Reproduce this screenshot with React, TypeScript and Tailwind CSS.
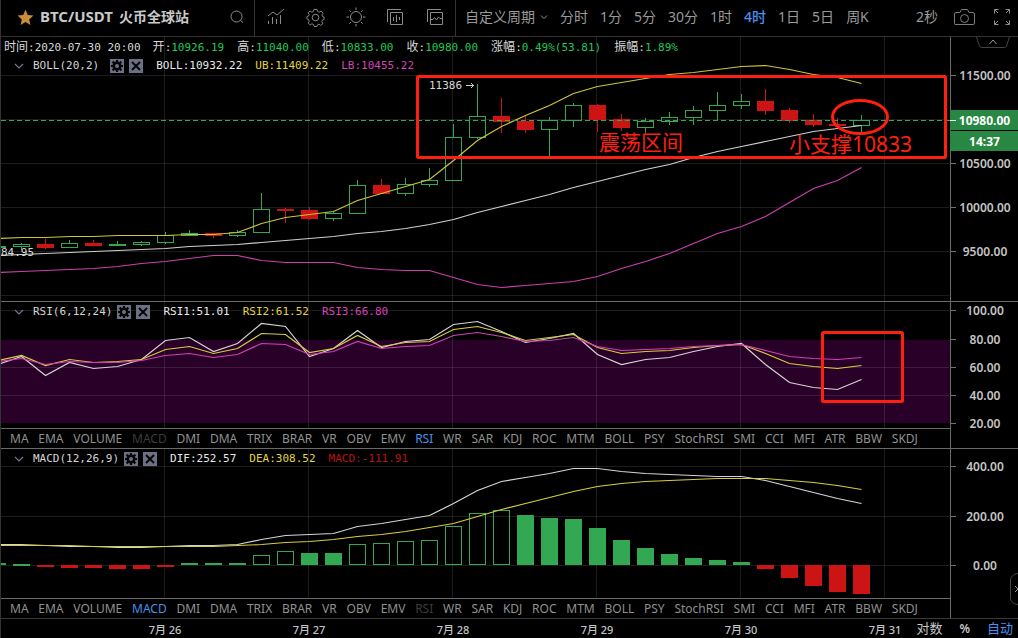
import clsx from "clsx";
import { ReactNode } from "react";

type Candle = [high: number, top: number, bottom: number, low: number, up: boolean];

const MONO = "font-['DejaVu_Sans_Mono','Noto_Sans_CJK_SC',monospace]";
const SANS = "font-['Noto_Sans','Noto_Sans_CJK_SC',sans-serif]";

const STEP = 24;
const FIRST_X = -3;
const BODY = 17;
const DAYS = [165, 309, 453, 597, 741, 885];

const CANDLES: Candle[] = [
    [246, 246, 248, 248, true],
    [243, 244, 247, 250, true],
    [239, 244, 248, 249, false],
    [240, 243, 248, 248, true],
    [240, 243, 246, 246, false],
    [241, 244, 246, 246, true],
    [241, 242, 245, 246, true],
    [232, 235, 243, 244, true],
    [230, 233, 236, 236, true],
    [233, 233, 236, 238, false],
    [230, 232, 236, 237, true],
    [193, 209, 233, 233, true],
    [208, 209, 211, 223, false],
    [207, 210, 219, 220, false],
    [212, 213, 219, 221, true],
    [180, 185, 214, 214, true],
    [179, 185, 194, 194, false],
    [178, 184, 194, 196, true],
    [168, 180, 185, 187, true],
    [124, 137, 181, 181, true],
    [84, 116, 138, 139, true],
    [98, 116, 122, 133, false],
    [116, 121, 130, 133, false],
    [117, 120, 130, 156, true],
    [103, 105, 121, 127, true],
    [104, 105, 120, 132, false],
    [114, 119, 128, 131, false],
    [118, 121, 128, 133, true],
    [112, 117, 122, 125, true],
    [106, 110, 118, 125, true],
    [92, 105, 111, 120, true],
    [94, 101, 106, 109, true],
    [89, 101, 111, 115, false],
    [108, 110, 121, 123, false],
    [114, 120, 125, 127, false],
    [118, 124, 126, 126, false],
    [115, 120, 126, 132, true],
];

const UPPER = [
    238, 237, 237, 236, 236, 235, 235, 235, 234, 234, 232, 223, 217, 214, 211, 200, 193, 186, 179, 160, 140, 126, 115,
    105, 93, 86, 82, 78, 74, 72, 69, 66, 65, 69, 74, 77, 83,
];
const MIDDLE = [
    255, 254, 253, 252, 251, 250, 249, 248, 246, 245, 244, 242, 240, 238, 236, 233, 231, 228, 224, 219, 212, 206, 200,
    194, 187, 181, 175, 169, 164, 157, 151, 146, 141, 136, 131, 128, 125,
];
const LOWER = [
    272, 271, 270, 269, 268, 266, 263, 261, 258, 255, 255, 260, 262, 262, 262, 267, 269, 270, 270, 277, 284, 287, 285,
    283, 281, 276, 268, 261, 253, 243, 233, 226, 216, 202, 188, 180, 167,
];

const RSI1 = [
    364, 356, 375, 362, 368, 366, 359, 340, 337, 351, 343, 323, 326, 356, 348, 330, 347, 341, 339, 324, 321, 331, 342,
    338, 333, 354, 364, 359, 357, 351, 346, 343, 364, 382, 387, 389, 379,
];
const RSI2 = [
    360, 355, 365, 359, 362, 361, 359, 349, 346, 353, 348, 333, 334, 352, 348, 335, 346, 342, 341, 329, 326, 332, 340,
    337, 334, 347, 353, 351, 350, 347, 345, 344, 353, 363, 366, 368, 365,
];
const RSI3 = [
    361, 358, 364, 361, 362, 362, 360, 355, 353, 357, 354, 343, 344, 354, 351, 341, 348, 346, 345, 335, 332, 336, 341,
    340, 337, 346, 350, 349, 348, 346, 345, 344, 350, 356, 358, 359, 357,
];

const DIF = [
    544, 544, 545, 546, 546, 547, 547, 546, 545, 545, 544, 539, 535, 534, 533, 526, 523, 519, 515, 503, 490, 481, 477,
    473, 468, 468, 471, 473, 474, 475, 476, 476, 480, 486, 492, 498, 503,
];
const DEA = [
    545, 545, 545, 545, 546, 546, 546, 546, 546, 546, 545, 544, 542, 541, 539, 536, 534, 531, 527, 523, 516, 509, 503,
    497, 491, 486, 483, 481, 480, 479, 478, 478, 478, 480, 482, 485, 489,
];

// "rise" bars are drawn hollow
const BARS: [number, number, "up" | "rise" | "down"][] = [
    [563, 565, "up"],
    [564, 566, "up"],
    [565, 567, "down"],
    [565, 568, "down"],
    [565, 568, "down"],
    [565, 569, "down"],
    [565, 569, "down"],
    [565, 567, "down"],
    [563, 565, "up"],
    [563, 565, "up"],
    [563, 565, "up"],
    [555, 565, "rise"],
    [551, 565, "rise"],
    [553, 565, "up"],
    [553, 565, "up"],
    [544, 565, "rise"],
    [543, 565, "rise"],
    [541, 565, "rise"],
    [540, 565, "rise"],
    [526, 565, "rise"],
    [513, 565, "rise"],
    [510, 565, "rise"],
    [515, 565, "up"],
    [518, 565, "up"],
    [519, 565, "up"],
    [528, 565, "up"],
    [540, 565, "up"],
    [548, 565, "up"],
    [554, 565, "up"],
    [558, 565, "up"],
    [560, 565, "up"],
    [562, 565, "up"],
    [565, 569, "down"],
    [565, 578, "down"],
    [565, 586, "down"],
    [565, 592, "down"],
    [565, 594, "down"],
];

const INDICATORS =
    "MA EMA VOLUME MACD DMI DMA TRIX BRAR VR OBV EMV RSI WR SAR KDJ ROC MTM BOLL PSY StochRSI SMI CCI MFI ATR BBW SKDJ".split(
        " "
    );

const PERIODS = ["分时", "1分", "5分", "30分", "1时", "4时", "1日", "5日", "周K"];

const SUMMARY = [
    ["开", "10926.19"],
    ["高", "11040.00"],
    ["低", "10833.00"],
    ["收", "10980.00"],
    ["涨幅", "0.49%(53.81)"],
    ["振幅", "1.89%"],
];

const cx = (i: number) => FIRST_X + STEP * i;

const Curve = ({ values, color }: { values: number[]; color: string }) => (
    <polyline
        points={values.map((y, i) => `${cx(i) + 0.5},${y + 0.5}`).join(" ")}
        fill="none"
        stroke={color}
        strokeWidth={1.2}
    />
);

const Grid = ({ rows, height, top }: { rows: number[]; height: number; top: number }) => (
    <g fill="#fff" fillOpacity={0.11} shapeRendering="crispEdges">
        {rows.map((y) => (
            <rect key={y} x={0} y={y} width="100%" height={1} />
        ))}
        {DAYS.map((x) => (
            <rect key={x} x={x - 1} y={top} width={1} height={height} />
        ))}
    </g>
);

const Axis = ({ top, height, labels }: { top: number; height: number; labels: [number, string][] }) => (
    <svg className={clsx("block w-full", SANS)} height={height}>
        <g transform={`translate(-951 ${-top})`}>
            {labels.map(([y, text]) => (
                <g key={text}>
                    <rect x={951} y={y} width={5} height={1} fill="#6e6e6e" />
                    <text x={985} y={y + 5} textAnchor="middle" fill="#c4c4c4" fontSize={12} fontWeight={600}>
                        {text}
                    </text>
                </g>
            ))}
        </g>
    </svg>
);

const Pane = ({ children, axis, last }: { children: ReactNode; axis: ReactNode; last?: boolean }) => (
    <section className={clsx("flex border-b", last ? "border-[#3a3a3a]" : "border-[#6a6a6a]")}>
        <div className="relative min-w-0 flex-1">{children}</div>
        <div className="relative w-[68px] shrink-0 border-l border-[#6a6a6a]">{axis}</div>
    </section>
);

const GearGlyph = () => (
    <svg width="14" height="14" viewBox="0 0 14 14">
        <rect width="14" height="14" fill="#6b7084" />
        <circle cx="7" cy="7" r="3.3" fill="none" stroke="#050505" strokeWidth="2.6" />
        <path
            d="M7 1v2M7 11v2M1 7h2M11 7h2M2.6 2.6l1.6 1.6M9.8 9.8l1.6 1.6M2.6 11.4l1.6-1.6M9.8 4.2l1.6-1.6"
            stroke="#050505"
            strokeWidth="2.2"
        />
    </svg>
);

const CloseGlyph = () => (
    <svg width="14" height="14" viewBox="0 0 14 14">
        <rect width="14" height="14" fill="#6b7084" />
        <path d="M3 3l8 8M11 3l-8 8" stroke="#050505" strokeWidth="2" />
    </svg>
);

interface LegendProps {
    name: string;
    wide?: boolean;
    values: [string, string][];
}

const Legend = ({ name, wide, values }: LegendProps) => (
    <div className={clsx("flex h-4 items-center whitespace-pre pl-[13px] text-[11px] leading-4", MONO)}>
        <button className="mr-[9px]" aria-label="收起">
            <svg className="block" width="10" height="6" viewBox="0 0 10 6">
                <path d="M1 1l4 4 4-4" fill="none" stroke="#737a8c" strokeWidth="1.2" />
            </svg>
        </button>
        <span className={clsx("text-[#d4d4d4]", wide ? "mr-[11px]" : "mr-[5px]")}>{name}</span>
        <button className="mr-[5px]" aria-label={`${name} 设置`}>
            <GearGlyph />
        </button>
        <button className="mr-[13px]" aria-label={`${name} 关闭`}>
            <CloseGlyph />
        </button>
        {values.map(([text, color]) => (
            <span key={text} className={clsx("mr-[13px]", color)}>
                {text}
            </span>
        ))}
    </div>
);

const IndicatorTabs = ({ active, disabled }: { active: string; disabled: string }) => (
    <nav
        className={clsx(
            "h-5 overflow-hidden border-t border-[#6a6a6a] pl-[9px] pr-8 text-xs leading-none",
            SANS
        )}
    >
        <div className="flex h-full max-w-5xl items-center justify-between">
            {INDICATORS.map((name) => (
                <button
                    key={name}
                    disabled={name === disabled}
                    className={clsx(
                        name === active ? "text-[#4a90e8]" : name === disabled ? "text-[#3c3c3e]" : "text-[#909090]"
                    )}
                >
                    {name}
                </button>
            ))}
        </div>
    </nav>
);

const Toolbar = () => (
    <header className={clsx("flex h-[37px] items-center border-b border-[#333] text-sm text-[#9a9a9a]", SANS)}>
        <div className="flex h-full w-[254px] shrink-0 items-center border-r border-[#333] pl-4 pb-[2px]">
            <svg width="17" height="17" viewBox="0 0 17 17" className="mr-[6px]">
                <path d="M8.5.8l2.3 5.2 5.6.6-4.2 3.8 1.2 5.6-4.9-2.9L3.6 16l1.2-5.6L.6 6.6l5.6-.6z" fill="#cd8b3e" />
            </svg>
            <h1 className="flex items-center gap-[6px] whitespace-nowrap text-sm font-bold text-[#c9c9c9]">
                <span className="text-[15px]">BTC/USDT</span>
                <span>火币全球站</span>
            </h1>
            <button className="ml-auto mr-[10px]" aria-label="搜索">
                <svg width="14" height="14" viewBox="0 0 14 14" fill="none" stroke="#8c8c8c">
                    <circle cx="6.5" cy="6.5" r="5.5" />
                    <path d="M10.5 10.5l2.5 2" />
                </svg>
            </button>
        </div>
        <div className="flex h-full w-[201px] shrink-0 items-center gap-[21px] border-r border-[#333] pl-3 pb-[2px]">
            <button aria-label="指标">
                <svg width="18" height="18" viewBox="0 0 18 18" fill="none" stroke="#8c8c8c">
                    <path d="M1 8l5-4 4 3 7-6M1.5 13v3M5.5 9v7M9.5 11v5M13.5 7v9" />
                </svg>
            </button>
            <button aria-label="设置">
                <svg width="19" height="19" viewBox="0 0 20 20" fill="none" stroke="#8c8c8c" strokeLinejoin="round">
                    <circle cx="10" cy="10" r="3.5" />
                    <path d="M8.3 1.5h3.4l.5 2.1 1.8.8 1.9-1.2 2.1 2.3-1.2 1.8.7 1.7 1.5.5v2.6l-1.7.5-.7 1.8 1.2 1.9-2.3 2-1.7-1.1-1.8.7-.5 1.6H8.500L8 17.4l-1.8-.7-1.8 1.1-2.2-2 1.2-1.900-.8-1.8-1.6-.5V9l1.600-.5.8-1.7L2.200 5l2.200-1.800L6.100 4.400 7.800 3.600z" />
                </svg>
            </button>
            <button aria-label="主题">
                <svg width="20" height="20" viewBox="0 0 20 20" fill="none" stroke="#8c8c8c">
                    <circle cx="10" cy="10" r="5.5" />
                    <path d="M10 .5V3M10 17v2.5M.5 10H3M17 10h2.5M3.3 3.3L5 5M15 15l1.7 1.7M3.3 16.700L5 15M15 5l1.700-1.700" />
                </svg>
            </button>
            <div className="flex gap-6">
                <button aria-label="多图">
                    <svg width="16" height="16" viewBox="0 0 16 16" fill="none" stroke="#8c8c8c">
                        <path d="M.5 13V.5H14M3.5 3.5h12v12h-12zM6.5 8v4M9.5 6v7M12.5 8v3" />
                    </svg>
                </button>
                <button aria-label="画线">
                    <svg width="16" height="16" viewBox="0 0 16 16" fill="none" stroke="#8c8c8c">
                        <path d="M.5 13V.5H14M3.5 3.5h12v12h-12zM4 10.5h2l1.5-2 2 2.5 2-3 1.5 1.5H15" />
                    </svg>
                </button>
            </div>
        </div>
        <div className="flex min-w-0 flex-1 items-center whitespace-nowrap pl-[9px] pr-2 pb-[2px]">
            <button className="mr-3 flex items-center gap-[5px]">
                自定义周期
                <svg width="8" height="5" viewBox="0 0 8 5" fill="none" stroke="#8c8c8c">
                    <path d="M1 .5l3 3 3-3" />
                </svg>
            </button>
            <div className="flex gap-3">
                {PERIODS.map((period) => (
                    <button key={period} className={clsx(period === "4时" && "font-medium text-[#4a90f0]")}>
                        {period}
                    </button>
                ))}
            </div>
            <button className="ml-auto mr-4">2秒</button>
            <button className="mr-[19px]" aria-label="截图">
                <svg width="21" height="17" viewBox="0 0 21 17" fill="none" stroke="#7c7c7c">
                    <path d="M2 3.5h4l1.5-3h6l1.5 3h4q1.5 0 1.5 1.5v9q0 1.5-1.5 1.5H2Q.5 16 .5 14.5V5Q.5 3.5 2 3.5z" />
                    <circle cx="10.5" cy="9.5" r="4" />
                </svg>
            </button>
            <button aria-label="全屏">
                <svg width="16" height="16" viewBox="0 0 16 16" fill="none" stroke="#8c8c8c">
                    <path d="M.5 4.5v-4h4M.5.5L4 4M11.5.5h4v4M15.5.5L12 4M.5 11.5v4h4M.5 15.5L4 12M15.5 11.5v4h-4M15.5 15.5L12 12" />
                </svg>
            </button>
        </div>
    </header>
);

const PricePane = () => (
    <Pane
        axis={
            <>
                <Axis
                    top={37}
                    height={264}
                    labels={[
                        [75, "11500.00"],
                        [163, "10500.00"],
                        [207, "10000.00"],
                        [251, "9500.00"],
                    ]}
                />
                <div
                    className={clsx(
                        "absolute -left-px right-0 top-[73px] space-y-px text-center text-xs font-bold text-white",
                        SANS
                    )}
                >
                    <div className="flex h-5 items-center justify-center bg-[#278743] pl-px pt-px leading-5">
                        <span className="absolute left-0 h-px w-[6px] bg-white" />
                        10980.00
                    </div>
                    <div className="h-5 bg-[#278743] pl-px pt-px leading-5">14:37</div>
                </div>
                <button className="absolute right-2 top-0" aria-label="收起工具栏">
                    <svg className="block" width="34" height="11" viewBox="0 0 34 11" fill="none">
                        <path d="M.5 0l3 9q.5 1.5 2 1.5h23q1.5 0 2-1.5l3-9" stroke="#444" />
                        <path d="M13.5 7l3.5-4 3.5 4" stroke="#999" />
                    </svg>
                </button>
            </>
        }
    >
        <svg className="block h-[264px] w-full">
            <g transform="translate(-1 -37)">
                <Grid rows={[75, 119, 163, 207, 251, 295]} top={37} height={264} />
                <g shapeRendering="crispEdges">
                    {CANDLES.map(([high, top, bottom, low, up], i) => {
                        const x = cx(i);
                        const color = up ? "#32a852" : "#cc1414";
                        return (
                            <g key={i}>
                                <rect x={x} y={high} width={1} height={top - high} fill={color} />
                                <rect x={x} y={bottom} width={1} height={low - bottom} fill={color} />
                                <rect
                                    x={x - 7.5}
                                    y={top + 0.5}
                                    width={BODY - 1}
                                    height={bottom - top - 1}
                                    fill={up ? "none" : color}
                                    stroke={color}
                                />
                            </g>
                        );
                    })}
                </g>
                <Curve values={UPPER} color="#cfc43c" />
                <Curve values={MIDDLE} color="#cfcfcf" />
                <Curve values={LOWER} color="#cc3fb0" />
                <path d="M1 120.5H2400" stroke="#32a852" strokeDasharray="5 3" />
                <g className={MONO} fontSize={11} fill="#d8d8d8">
                    <text x={1} y={256}>
                        84.95
                    </text>
                    <text x={429} y={89}>
                        11386
                    </text>
                </g>
                <path d="M466 85.5h8M471 83l2.5 2.5-2.5 2.5" fill="none" stroke="#d0d0d0" />
                <g fill="none" stroke="#ff1f10" strokeWidth={3}>
                    <rect x={417.5} y={76.5} width={528} height={81} rx={1} />
                    <ellipse cx={860} cy={117} rx={27.5} ry={16.5} />
                </g>
                <g className={SANS} fontSize={21} fill="#ff1f10">
                    <text x={599} y={150}>
                        震荡区间
                    </text>
                    <text x={789} y={152}>
                        小支撑10833
                    </text>
                </g>
            </g>
        </svg>
        <div className="absolute inset-x-0 top-0 pt-[2px]">
            <p className={clsx("mb-[3px] flex h-4 whitespace-nowrap pl-[3px] text-[11px] leading-4 text-[#d8d8d8]", MONO)}>
                <span className="mr-3">
                    <span className="text-xs leading-4">时间</span>:2020-07-30 20:00
                </span>
                {SUMMARY.map(([label, value]) => (
                    <span key={label} className="mr-[13px]">
                        <span className="text-xs leading-4">{label}</span>:<span className="text-[#1fc95a]">{value}</span>
                    </span>
                ))}
            </p>
            <Legend
                name="BOLL(20,2)"
                wide
                values={[
                    ["BOLL:10932.22", "text-[#e8e8e8]"],
                    ["UB:11409.22", "text-[#e0d540]"],
                    ["LB:10455.22", "text-[#d843bc]"],
                ]}
            />
        </div>
    </Pane>
);

const RsiPane = () => (
    <Pane
        axis={
            <Axis
                top={302}
                height={146}
                labels={[
                    [310, "100.00"],
                    [339, "80.00"],
                    [367, "60.00"],
                    [395, "40.00"],
                    [423, "20.00"],
                ]}
            />
        }
    >
        <svg className="block h-[126px] w-full">
            <g transform="translate(-1 -302)">
                <rect x={0} y={340} width="110%" height={83} fill="#280028" />
                <Grid rows={[310, 367, 395]} top={302} height={126} />
                <Curve values={RSI1} color="#d4d4d4" />
                <Curve values={RSI2} color="#d8cd3e" />
                <Curve values={RSI3} color="#d040b4" />
                <rect x={822.5} y={332.5} width={80} height={69} rx={1} fill="none" stroke="#ff1f10" strokeWidth={3} />
            </g>
        </svg>
        <div className="absolute inset-x-0 top-[2px]">
            <Legend
                name="RSI(6,12,24)"
                values={[
                    ["RSI1:51.01", "text-[#e8e8e8]"],
                    ["RSI2:61.52", "text-[#e0d540]"],
                    ["RSI3:66.80", "text-[#d843bc]"],
                ]}
            />
        </div>
        <IndicatorTabs active="RSI" disabled="MACD" />
    </Pane>
);

const MacdPane = () => (
    <Pane
        last
        axis={
            <>
                <Axis
                    top={449}
                    height={169}
                    labels={[
                        [466, "400.00"],
                        [516, "200.00"],
                        [565, "0.00"],
                    ]}
                />
                <button className="absolute right-0 top-[124px]" aria-label="展开侧栏">
                    <svg className="block" width="8" height="32" viewBox="0 0 8 32" fill="none">
                        <path d="M8 .5Q3.5.5 1.5 4 .5 5 .5 7v18q0 2 1 3.5Q3.5 31.5 8 31.5" stroke="#444" />
                        <path d="M5 13l3 3-3 3" stroke="#999" />
                    </svg>
                </button>
            </>
        }
    >
        <svg className="block h-[149px] w-full">
            <g transform="translate(-1 -449)">
                <Grid rows={[466, 516, 565]} top={449} height={149} />
                <g shapeRendering="crispEdges">
                    {BARS.map(([top, bottom, kind], i) => {
                        const color = kind === "down" ? "#cc1414" : "#32a852";
                        return (
                            <rect
                                key={i}
                                x={cx(i) - 7.5}
                                y={top + 0.5}
                                width={BODY - 1}
                                height={bottom - top - 1}
                                fill={kind === "rise" ? "none" : color}
                                stroke={color}
                            />
                        );
                    })}
                </g>
                <Curve values={DIF} color="#d4d4d4" />
                <Curve values={DEA} color="#d8cd3e" />
            </g>
        </svg>
        <div className="absolute inset-x-0 top-[2px]">
            <Legend
                name="MACD(12,26,9)"
                values={[
                    ["DIF:252.57", "text-[#e8e8e8]"],
                    ["DEA:308.52", "text-[#e0d540]"],
                    ["MACD:-111.91", "text-[#b81414]"],
                ]}
            />
        </div>
        <IndicatorTabs active="MACD" disabled="RSI" />
    </Pane>
);

const TimeAxis = () => (
    <footer className={clsx("flex h-[19px] items-center text-[#c8c8c8]", SANS)}>
        <svg className="block h-[19px] min-w-0 flex-1">
            {DAYS.map((x, i) => (
                <text
                    key={x}
                    x={x - 1}
                    y={15}
                    textAnchor="middle"
                    fill="#c4c4c4"
                    fontSize={11}
                    fontWeight={500}
                >{`7月 ${26 + i}`}</text>
            ))}
        </svg>
        <div className="flex items-center gap-[17px] pr-[5px] text-[13px] leading-none">
            <button>对数</button>
            <button className="text-xs leading-none font-semibold">%</button>
            <button className="text-[#4a90f0]">自动</button>
        </div>
    </footer>
);

const App = () => (
    <main className="overflow-hidden border-l border-[#333] bg-black">
        <Toolbar />
        <PricePane />
        <RsiPane />
        <MacdPane />
        <TimeAxis />
    </main>
);

export default App;
